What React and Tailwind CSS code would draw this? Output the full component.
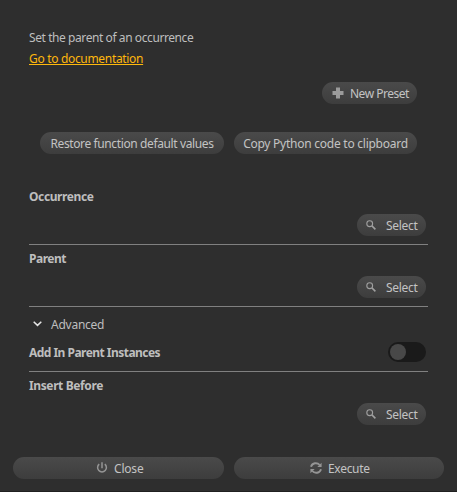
const buttonBase =
  'flex h-[22px] items-center rounded-full bg-linear-to-b from-[#4a4a4a] to-[#3d3d3d] whitespace-nowrap text-[#c3c3c3]';

function SearchIcon() {
  return (
    <svg className="size-[10px] shrink-0" viewBox="0 0 10 10" fill="none" stroke="#a0a0a0">
      <circle cx="3.7" cy="3.7" r="2.9" strokeWidth="1.1" />
      <path d="M5.9 5.9 9.4 9.4" strokeWidth="1.5" />
    </svg>
  );
}

function PlusIcon() {
  return (
    <svg className="size-[12px] shrink-0" viewBox="0 0 12 12" fill="#9b9b9b">
      <path d="M4 0.5h4V4h3.5v4H8v3.5H4V8H0.5V4H4z" />
    </svg>
  );
}

function PowerIcon() {
  return (
    <svg className="size-[12px] shrink-0" viewBox="0 0 12 12" fill="none" stroke="#959595" strokeWidth="1.5">
      <path d="M3.2 2.2A4.4 4.4 0 1 0 8.8 2.2" />
      <path d="M6 0.3V6.2" />
    </svg>
  );
}

function RefreshIcon() {
  return (
    <svg className="size-[12px] shrink-0" viewBox="0 0 12 12" fill="none" stroke="#959595" strokeWidth="1.9">
      <path d="M1 4.8C2.2 0.7 7.2 0.1 9.7 3" />
      <path d="M11 7.2C9.8 11.3 4.8 11.9 2.3 9" />
      <path d="M11.6 0.7V5H7.3z M0.4 11.3V7H4.7z" fill="#959595" stroke="none" />
    </svg>
  );
}

function SelectButton() {
  return (
    <button className={`${buttonBase} ml-auto mr-[2px] w-[69px] pl-[9px]`}>
      <SearchIcon />
      <span className="ml-[10px] pt-[2px] tracking-[-0.3px]">Select</span>
    </button>
  );
}

export default function App() {
  return (
    <div className="flex h-[492px] w-[457px] flex-col border-b border-[#202020] bg-[#2e2e2e] font-['Noto_Sans','Open_Sans',sans-serif] text-[12px] leading-4 text-[#bebebe]">
      <main className="flex flex-col pr-[29px] pl-[29px] pt-[30px]">
        <p className="h-[21px] tracking-[-0.42px]">Set the parent of an occurrence</p>
        <a className="h-[31px] w-fit tracking-[-0.32px] text-[#ffb80c] underline decoration-1 underline-offset-1">Go to documentation</a>
        <button className={`${buttonBase} mr-[11px] w-[95px] self-end pl-[10px]`}>
          <PlusIcon />
          <span className="ml-[6px] pt-[2px] tracking-[-0.5px]">New Preset</span>
        </button>
        <div className="mt-[28px] ml-[11px] flex gap-[10px]">
          <button className={`${buttonBase} w-[184px] justify-center pt-[2px] tracking-[-0.38px]`}>Restore function default values</button>
          <button className={`${buttonBase} w-[183px] justify-center pt-[2px] tracking-[-0.25px]`}>Copy Python code to clipboard</button>
        </div>
        <section className="mt-[35px] flex h-[56px] flex-col border-b border-[#808080]">
          <h2 className="h-[25px] font-bold tracking-[-0.4px]">Occurrence</h2>
          <SelectButton />
        </section>
        <section className="mt-[6px] flex h-[56px] flex-col border-b border-[#808080]">
          <h2 className="h-[25px] font-bold tracking-[-0.5px]">Parent</h2>
          <SelectButton />
        </section>
        <div className="mt-[9px] flex h-[16px] items-center pl-[4px]">
          <svg className="h-[6px] w-[9px]" viewBox="0 0 9 6" fill="none" stroke="#e5e5e5" strokeWidth="1.5">
            <path d="M0.7 0.8 4.5 4.4 8.3 0.8" />
          </svg>
          <span className="ml-[9px] pt-px tracking-[-0.25px]">Advanced</span>
        </div>
        <div className="mt-[10px] flex h-[30px] items-start justify-between border-b border-[#808080] pr-[2px]">
          <h2 className="pt-[3px] font-bold tracking-[-0.53px]">Add In Parent Instances</h2>
          <div className="flex h-[20px] w-[38px] items-center rounded-full bg-[#1a1a1a] pl-[2px]">
            <span className="size-4 rounded-full bg-[#484848]" />
          </div>
        </div>
        <section className="mt-[6px] flex flex-col">
          <h2 className="h-[25px] font-bold tracking-[-0.38px]">Insert Before</h2>
          <SelectButton />
        </section>
      </main>
      <footer className="mt-[32px] flex gap-[10px] pl-[13px]">
        <button className={`${buttonBase} w-[211px] pl-[83px]`}>
          <PowerIcon />
          <span className="ml-[6px] pt-[2px] tracking-[-0.2px]">Close</span>
        </button>
        <button className={`${buttonBase} w-[210px] pl-[76px]`}>
          <RefreshIcon />
          <span className="ml-[6px] pt-[2px] tracking-[-0.3px]">Execute</span>
        </button>
      </footer>
    </div>
  );
}
